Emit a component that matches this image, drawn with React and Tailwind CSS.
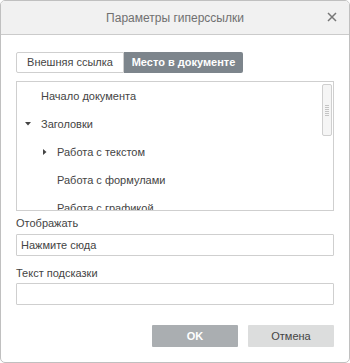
import React from 'react';

const items = [
  { label: 'Начало документа', level: 0, arrow: null },
  { label: 'Заголовки', level: 0, arrow: 'down' },
  { label: 'Работа с текстом', level: 1, arrow: 'right' },
  { label: 'Работа с формулами', level: 1, arrow: null },
  { label: 'Работа с графикой', level: 1, arrow: null },
];

const Arrow = ({ dir }) =>
  dir === 'down' ? (
    <svg width="6" height="4" viewBox="0 0 6 4" className="block">
      <path d="M0 0 H6 L3 3.5 Z" fill="#444" />
    </svg>
  ) : (
    <svg width="4" height="6" viewBox="0 0 4 6" className="block">
      <path d="M0 0 V6 L3.5 3 Z" fill="#444" />
    </svg>
  );

const HyperlinkDialog = () => {
  return (
    <div
      className="w-[350px] h-[363px] bg-white border border-[#c0c0c0] rounded-[5px] overflow-hidden flex flex-col text-[11px] text-[#444]"
      style={{ fontFamily: '"Liberation Sans", Arial, sans-serif' }}
    >
      {/* Header */}
      <div className="relative h-[34px] shrink-0 bg-[#f1f1f1] border-b border-[#cbcbcb] flex items-center justify-center">
        <span className="text-[12px] text-[#707070]">Параметры гиперссылки</span>
        <svg width="10" height="10" viewBox="0 0 10 10" className="absolute right-[12px] top-[11px]">
          <path d="M1 1 L9 9 M9 1 L1 9" stroke="#777" strokeWidth="1.5" />
        </svg>
      </div>

      <div className="px-[15px] flex flex-col">
        {/* Tabs */}
        <div className="mt-[17px] flex h-[21px]">
          <div className="w-[108px] border border-[#cfcfcf] rounded-l-[2px] flex items-center justify-center bg-white">
            Внешняя ссылка
          </div>
          <div className="w-[119px] bg-[#7d858c] rounded-r-[2px] flex items-center justify-center text-white font-bold">
            Место в документе
          </div>
        </div>

        {/* Tree */}
        <div className="relative mt-[8px] h-[130px] border border-[#cfcfcf] overflow-hidden">
          <div className="pt-[0px]">
            {items.map((it) => (
              <div key={it.label} className="h-[28px] flex items-center whitespace-nowrap">
                <div className={`${it.level ? 'w-[40px]' : 'w-[24px]'} shrink-0 flex justify-end pr-[10px]`}>
                  {it.arrow && <Arrow dir={it.arrow} />}
                </div>
                <span>{it.label}</span>
              </div>
            ))}
          </div>
          {/* Scrollbar */}
          <div className="absolute right-[1px] top-[2px] w-[10px] h-[52px] bg-[#f5f5f5] border border-[#cfcfcf] rounded-[2px] flex items-center justify-center">
            <div className="flex flex-col gap-[1px]">
              {[0, 1, 2, 3, 4, 5].map((i) => (
                <div key={i} className="w-[4px] h-[1px] bg-[#c4c4c4]" />
              ))}
            </div>
          </div>
        </div>

        {/* Display */}
        <div className="mt-[5px] leading-[14px]">Отображать</div>
        <div className="mt-[4px] h-[22px] border border-[#cfcfcf] rounded-[1px] flex items-center px-[4px]">
          Нажмите сюда
        </div>

        <div className="mt-[10px] leading-[14px]">Текст подсказки</div>
        <div className="mt-[3px] h-[22px] border border-[#cfcfcf] rounded-[1px]" />

        {/* Buttons */}
        <div className="mt-[20px] flex justify-end gap-[10px]">
          <div className="w-[86px] h-[22px] bg-[#aaaeb1] flex items-center justify-center text-white font-bold rounded-[1px]">
            OK
          </div>
          <div className="w-[86px] h-[22px] bg-[#dcdddd] flex items-center justify-center rounded-[1px]">
            Отмена
          </div>
        </div>
      </div>
    </div>
  );
};

export default function App() {
  return <HyperlinkDialog />;
}
